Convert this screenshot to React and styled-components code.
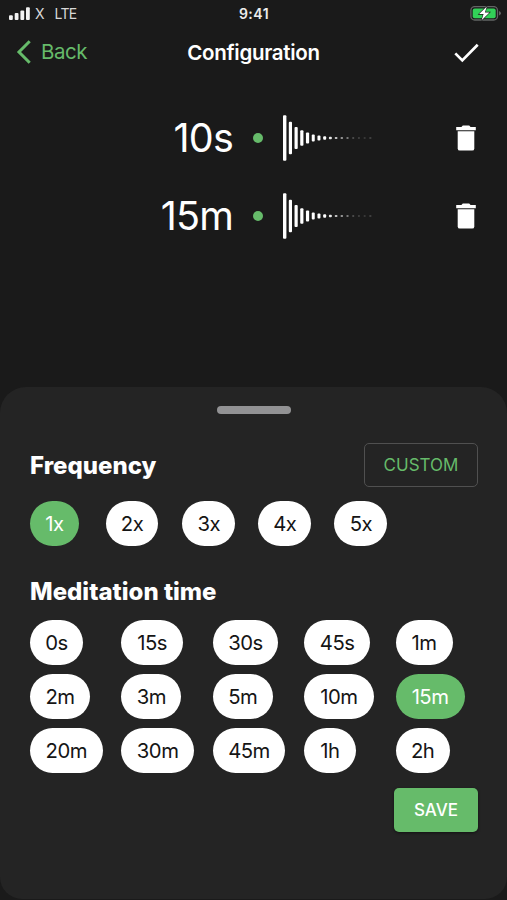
import React, { useState } from "react";
import styled, { createGlobalStyle } from "styled-components";

const COLORS = {
  Background: "#1a1a1a",
  Sheet: "#242424",
  Green: "#66bb6a",
  White: "#ffffff",
  Handle: "#929294",
};

const FREQUENCIES = [
  { label: "1x", width: 49 },
  { label: "2x", width: 52 },
  { label: "3x", width: 53 },
  { label: "4x", width: 53 },
  { label: "5x", width: 53 },
];

const TIMES = [
  { label: "0s", width: 53 },
  { label: "15s", width: 61.5 },
  { label: "30s", width: 65.5 },
  { label: "45s", width: 66 },
  { label: "1m", width: 57 },
  { label: "2m", width: 60 },
  { label: "3m", width: 60 },
  { label: "5m", width: 60 },
  { label: "10m", width: 69.5 },
  { label: "15m", width: 69 },
  { label: "20m", width: 72.5 },
  { label: "30m", width: 72.5 },
  { label: "45m", width: 72.5 },
  { label: "1h", width: 51.5 },
  { label: "2h", width: 54 },
];

// [height, width, opacity] of every bar in the sound wave
const WAVE = [
  [45.6, 3.4, 1],
  [32.4, 3.2, 1],
  [22, 3.2, 1],
  [15.6, 3.2, 1],
  [10.8, 3.2, 1],
  [7.2, 3, 1],
  [5, 3, 1],
  [3.6, 3, 1],
  [2.6, 3, 0.9],
  [2, 2.8, 0.75],
  [2, 2.6, 0.55],
  [1.8, 2.4, 0.42],
  [1.6, 2.2, 0.3],
  [1.6, 2.2, 0.22],
  [1.6, 2.2, 0.18],
  [1.6, 2.4, 0.22],
];

const GlobalStyle = createGlobalStyle`
  body {
    margin: 0;
    background: ${COLORS.Background};
  }

  button {
    font: inherit;
    margin: 0;
    padding: 0;
    border: 0;
    background: none;
    cursor: pointer;
  }
`;

const Screen = styled.main`
  display: flex;
  flex-direction: column;
  width: 507px;
  height: 900px;
  padding-bottom: 1px;
  overflow: hidden;
  box-sizing: border-box;
  background: ${COLORS.Background};
  color: ${COLORS.White};
  font-family: Inter, "Liberation Sans", sans-serif;
`;

const StatusBar = styled.div`
  display: grid;
  grid-template-columns: 1fr auto 1fr;
  align-items: center;
  height: 28px;
  padding: 0 6px 0 9px;
  box-sizing: border-box;
  flex: none;
`;

const Carrier = styled.div`
  display: flex;
  align-items: center;
  font-size: 14px;
  line-height: 16px;
  color: #d8d8d8;

  span {
    margin-left: 4px;
    padding-bottom: 1px;
  }

  span + span {
    margin-left: 10px;
    letter-spacing: -0.7px;
  }
`;

const Clock = styled.span`
  margin-right: 2px;
  padding-bottom: 2px;
  font-size: 14px;
  font-weight: 600;
  letter-spacing: 0.5px;
  color: #ececec;
`;

const Battery = styled.svg`
  justify-self: end;
`;

const NavBar = styled.header`
  display: grid;
  grid-template-columns: 1fr auto 1fr;
  align-items: center;
  height: 50px;
  padding: 0 28px 0 16px;
  flex: none;
`;

const BackButton = styled.button`
  display: flex;
  align-items: center;
  gap: 10px;
  justify-self: start;
  margin-bottom: 2px;
  color: ${COLORS.Green};

  span {
    font-size: 20.5px;
    line-height: 24px;
    letter-spacing: -0.5px;
  }
`;

const Title = styled.h1`
  margin: 0 -6px 0 6px;
  font-size: 20.5px;
  line-height: 26px;
  font-weight: 600;
  letter-spacing: -0.3px;
`;

const DoneButton = styled.button`
  display: flex;
  justify-self: end;
`;

const Intervals = styled.section`
  display: flex;
  flex-direction: column;
  height: 309px;
  padding-top: 21px;
  box-sizing: border-box;
  flex: none;
`;

const IntervalRow = styled.div`
  display: grid;
  grid-template-columns: 233px 50px 1fr 20px;
  align-items: center;
  height: 78px;
  padding-right: 31px;
`;

const Duration = styled.span`
  justify-self: end;
  font-size: 39.5px;
  font-weight: 400;
  line-height: 48px;
  letter-spacing: -0.8px;
`;

const Dot = styled.i`
  justify-self: center;
  width: 10px;
  height: 10px;
  border-radius: 50%;
  background: ${COLORS.Green};
`;

const DeleteButton = styled.button`
  display: flex;
`;

const Sheet = styled.section`
  flex: 1;
  padding: 19px 29px 0 30px;
  border-radius: 26px 26px 22px 22px;
  background: ${COLORS.Sheet};
`;

const Handle = styled.div`
  width: 74px;
  height: 8px;
  margin: 0 auto;
  border-radius: 4px;
  background: ${COLORS.Handle};
`;

const SectionHead = styled.div`
  display: flex;
  align-items: center;
  justify-content: space-between;
  height: ${p => p.$height};
  margin-top: ${p => p.$top};
`;

const SectionTitle = styled.h2`
  margin: 0;
  font-size: 24px;
  font-weight: 800;
  letter-spacing: 0;
`;

const ActionButton = styled.button`
  width: ${p => (p.$filled ? "84px" : "114px")};
  height: 44px;
  border-radius: 5px;
  box-sizing: border-box;
  font-size: 17px;
  font-weight: ${p => (p.$filled ? 500 : 400)};
  border: ${p => (p.$filled ? "0" : "1.5px solid #505050")};
  background: ${p => (p.$filled ? COLORS.Green : "transparent")};
  color: ${p => (p.$filled ? COLORS.White : COLORS.Green)};
  box-shadow: ${p => (p.$filled ? "0 1px 3px rgba(0, 0, 0, 0.5)" : "none")};
`;

const ChipGrid = styled.div`
  display: grid;
  grid-template-columns: repeat(5, ${p => p.$column});
  row-gap: 9px;
  margin-top: ${p => p.$top};
`;

const Chip = styled.button`
  width: ${p => p.$width}px;
  height: 45px;
  border-radius: 23px;
  white-space: nowrap;
  font-size: 20.3px;
  letter-spacing: -0.5px;
  background: ${p => (p.$active ? COLORS.Green : COLORS.White)};
  color: ${p => (p.$active ? COLORS.White : "#151515")};
`;

const Footer = styled.footer`
  display: flex;
  justify-content: flex-end;
  margin-top: 15px;
`;

function SignalIcon() {
  return (
    <svg width="22" height="14" viewBox="0 0 22 14" fill="#f2f2f2">
      <rect x="0" y="8.3" width="3.8" height="4.7" rx="1" />
      <rect x="5.7" y="6" width="3.8" height="7" rx="1" />
      <rect x="11.4" y="3.5" width="3.8" height="9.5" rx="1" />
      <rect x="17" y="0.2" width="3.8" height="12.8" rx="1" />
    </svg>
  );
}

function BatteryIcon() {
  return (
    <Battery width="31" height="16" viewBox="0 0 31 16">
      <rect x="0.9" y="0.6" width="26.6" height="13.4" rx="3.8" fill="none" stroke="#626564" strokeWidth="1.3" />
      <path d="M29 5q2 .8 2 2.3t-2 2.3z" fill="#626564" />
      <rect x="2.7" y="2.4" width="23" height="9.8" rx="2" fill="#32d158" />
      <path
        d="M16.8 0.4 9.1 8.1h4.5l-2 6.1 7.9-7.8h-4.6z"
        fill="#fff"
        stroke="#1a1a1a"
        strokeWidth="1.2"
        paintOrder="stroke"
      />
    </Battery>
  );
}

function SoundWave() {
  return (
    <svg width="92" height="48" viewBox="0 0 92 48" fill="#fff">
      {WAVE.map(([height, width, opacity], i) => (
        <rect
          key={i}
          x={1.7 + i * 5.71 - width / 2}
          y={24 - height / 2}
          width={width}
          height={height}
          rx={Math.min(1, height / 2)}
          opacity={opacity}
        />
      ))}
    </svg>
  );
}

function TrashIcon() {
  return (
    <svg width="20" height="27" viewBox="0 0 20 27" fill="#fff">
      <path d="M0.2 2.1h5.2L6.8.6h6.4l1.4 1.5h5.2v3.2H.2z" />
      <path d="M1.7 6.3h16.6v17.1q0 2.2-2.2 2.2H3.9q-2.2 0-2.2-2.2z" />
    </svg>
  );
}

function Interval({ duration }) {
  return (
    <IntervalRow>
      <Duration>{duration}</Duration>
      <Dot />
      <SoundWave />
      <DeleteButton aria-label="Delete">
        <TrashIcon />
      </DeleteButton>
    </IntervalRow>
  );
}

function ChipGroup({ items, value, onChange, column, top }) {
  return (
    <ChipGrid $column={column} $top={top}>
      {items.map(({ label, width }) => (
        <Chip key={label} $width={width} $active={label === value} onClick={() => onChange(label)}>
          {label}
        </Chip>
      ))}
    </ChipGrid>
  );
}

export default function App() {
  const [frequency, setFrequency] = useState("1x");
  const [time, setTime] = useState("15m");

  return (
    <Screen>
      <GlobalStyle />
      <StatusBar>
        <Carrier>
          <SignalIcon />
          <span>X</span>
          <span>LTE</span>
        </Carrier>
        <Clock>9:41</Clock>
        <BatteryIcon />
      </StatusBar>
      <NavBar>
        <BackButton>
          <svg width="15" height="24" viewBox="0 0 15 24" fill="none" stroke="currentColor" strokeWidth="3">
            <path d="M13.7 1.3 3 12l10.7 10.7" />
          </svg>
          <span>Back</span>
        </BackButton>
        <Title>Configuration</Title>
        <DoneButton aria-label="Done">
          <svg width="25" height="20" viewBox="0 0 25 20" fill="none" stroke="#fff" strokeWidth="2.7">
            <path d="m1.3 10.4 7 7L23.7 1.8" />
          </svg>
        </DoneButton>
      </NavBar>
      <Intervals>
        <Interval duration="10s" />
        <Interval duration="15m" />
      </Intervals>
      <Sheet>
        <Handle />
        <SectionHead $height="44px" $top="29px">
          <SectionTitle>Frequency</SectionTitle>
          <ActionButton>CUSTOM</ActionButton>
        </SectionHead>
        <ChipGroup items={FREQUENCIES} value={frequency} onChange={setFrequency} column="76.1px" top="14px" />
        <SectionHead $height="30px" $top="30px">
          <SectionTitle>Meditation time</SectionTitle>
        </SectionHead>
        <ChipGroup items={TIMES} value={time} onChange={setTime} column="91.4px" top="14px" />
        <Footer>
          <ActionButton $filled>SAVE</ActionButton>
        </Footer>
      </Sheet>
    </Screen>
  );
}
